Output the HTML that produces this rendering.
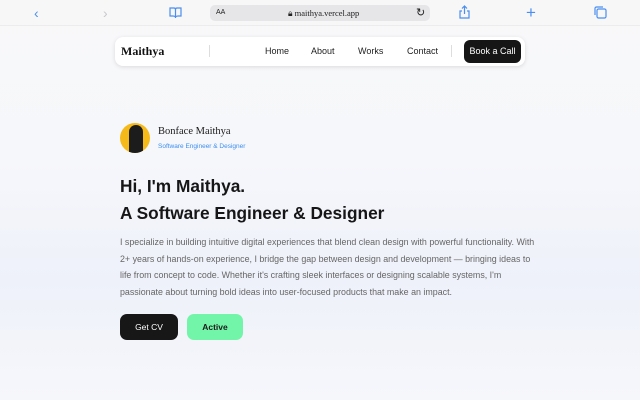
<!DOCTYPE html><html><head><style>
*{margin:0;padding:0;box-sizing:border-box}
body{width:640px;height:400px;overflow:hidden;font-family:"Liberation Sans",sans-serif;background:linear-gradient(180deg,#f8f8f9 0%,#f6f7fb 40%,#eef1fa 70%,#f6f7fb 100%);position:relative}
.top{position:absolute;left:0;top:0;width:640px;height:26px;background:#f7f7f8;border-bottom:1px solid #ececee}
.url{position:absolute;left:210px;top:5px;width:220px;height:16px;background:#e6e6e9;border-radius:5px;font-size:8px;color:#222}
.ic{position:absolute;top:5px;color:#4a8ff0;font-size:14px;line-height:16px}
.nav{position:absolute;left:115px;top:37px;width:410px;height:29px;background:#fff;border-radius:8px;box-shadow:0 1px 4px rgba(0,0,0,.12)}
.nav span{position:absolute;top:9px;font-size:9px;color:#222}
.btn{position:absolute;left:349px;top:3px;width:57px;height:23px;background:#161616;border-radius:6px;color:#fff;font-size:9px;text-align:center;line-height:23px}
</style></head><body>
<div class="top">
<div class="ic" style="left:34px">&#x2039;</div>
<div class="ic" style="left:103px;color:#c8c8cc">&#x203A;</div>
<svg style="position:absolute;left:169px;top:7px" width="13" height="11" viewBox="0 0 13 11"><path d="M1 1h4c1 0 1.5.5 1.5 1.5V10C6 9.3 5 9 4 9H1zM12 1H8c-1 0-1.5.5-1.5 1.5V10C7 9.3 8 9 9 9h3z" fill="none" stroke="#4a8ff0" stroke-width="1.2"/></svg>
<div class="url"><span style="position:absolute;left:6px;top:4px;font-size:7px">AA</span><span style="position:absolute;left:78px;top:3px;font-family:'Liberation Serif',serif;font-size:8.5px">&#x1F512;&#xFE0E; maithya.vercel.app</span><span style="position:absolute;left:206px;top:1px;font-size:11px">&#x21BB;</span></div>
<svg style="position:absolute;left:459px;top:5px" width="11" height="14" viewBox="0 0 11 14"><path d="M5.5 1v8M3 3.5l2.5-2.5L8 3.5M3 6H1v7h9V6H8" fill="none" stroke="#4a8ff0" stroke-width="1.2"/></svg>
<div class="ic" style="left:526px;font-size:17px">+</div>
<svg style="position:absolute;left:594px;top:6px" width="13" height="13" viewBox="0 0 13 13"><rect x="3" y="3" width="9" height="9" rx="1.5" fill="none" stroke="#4a8ff0" stroke-width="1.2"/><path d="M1 9V2.5C1 1.6 1.6 1 2.5 1H9" fill="none" stroke="#4a8ff0" stroke-width="1.2"/></svg>
</div>
<div class="nav">
<span style="left:6px;top:7px;font-family:'Liberation Serif',serif;font-size:12px;font-weight:bold;color:#111">Maithya</span>
<span style="left:94px;top:8px;width:1px;height:12px;background:#ddd"></span>
<span style="left:150px">Home</span><span style="left:196px">About</span><span style="left:243px">Works</span><span style="left:292px">Contact</span>
<span style="left:336px;top:8px;width:1px;height:12px;background:#ddd"></span>
<div class="btn">Book a Call</div>
</div>
<div style="position:absolute;left:120px;top:123px;width:30px;height:30px;border-radius:50%;background:#f5b91a;overflow:hidden"><div style="position:absolute;left:9px;top:2px;width:14px;height:30px;background:#1c1c1c;border-radius:7px 7px 0 0"></div></div>
<div style="position:absolute;left:158px;top:126px;font-family:'Liberation Serif',serif;font-size:10.5px;color:#1a1a1a">Bonface Maithya</div>
<div style="position:absolute;left:158px;top:143px;font-size:6.5px;color:#3b8ef0">Software Engineer &amp; Designer</div>
<div style="position:absolute;left:120px;top:173px;font-size:17.3px;font-weight:bold;color:#161616;line-height:27px">Hi, I'm Maithya.<br>A Software Engineer &amp; Designer</div>
<div style="position:absolute;left:120px;top:234px;width:418px;font-size:8.9px;color:#666;line-height:16.7px">I specialize in building intuitive digital experiences that blend clean design with powerful functionality. With 2+ years of hands-on experience, I bridge the gap between design and development — bringing ideas to life from concept to code. Whether it's crafting sleek interfaces or designing scalable systems, I'm passionate about turning bold ideas into user-focused products that make an impact.</div>
<div style="position:absolute;left:120px;top:314px;width:58px;height:26px;background:#171717;border-radius:7px;color:#fff;font-size:8.5px;text-align:center;line-height:26px">Get CV</div>
<div style="position:absolute;left:187px;top:314px;width:56px;height:26px;background:#72f5a8;border-radius:7px;color:#1a1a1a;font-size:8.5px;font-weight:bold;text-align:center;line-height:26px">Active</div>
</body></html>
